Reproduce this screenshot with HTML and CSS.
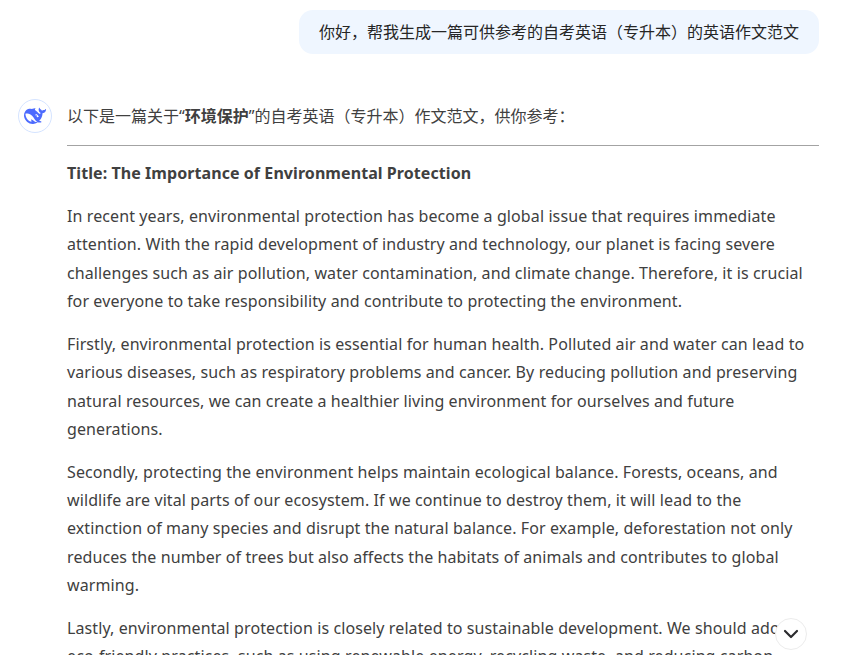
FILE: index.html
```html
<!DOCTYPE html>
<html lang="zh-CN">
<head>
    <meta charset="UTF-8">
    <meta name="viewport" content="width=device-width, initial-scale=1.0">
    <title>自考英语作文范文</title>
    <link rel="stylesheet" href="styles.css">
</head>
<body>
    <main class="chat">
        <div class="user-row">
            <div class="user-bubble">你好，帮我生成一篇可供参考的自考英语（专升本）的英语作文范文</div>
        </div>

        <div class="answer-row">
            <div class="avatar">
                <svg width="22" height="22" viewBox="0 0 24 24">
                    <path fill="#4d6bfe" d="M23.748 4.482c-.254-.124-.364.113-.512.234-.051.039-.094.09-.137.136-.372.397-.806.657-1.373.626-.829-.046-1.537.214-2.163.848-.133-.782-.575-1.248-1.247-1.548-.352-.156-.708-.311-.955-.65-.172-.241-.219-.51-.305-.774-.055-.16-.11-.323-.293-.35-.2-.031-.278.136-.356.276-.313.572-.434 1.202-.422 1.84.027 1.436.633 2.58 1.838 3.393.137.093.172.187.129.323-.082.28-.18.552-.266.833-.055.179-.137.217-.329.14a5.526 5.526 0 01-1.736-1.18c-.857-.828-1.631-1.742-2.597-2.458a11.365 11.365 0 00-.689-.471c-.985-.957.13-1.743.388-1.836.27-.098.093-.432-.779-.428-.872.004-1.67.295-2.687.684a3.055 3.055 0 01-.465.137 9.597 9.597 0 00-2.883-.102c-1.885.21-3.39 1.102-4.497 2.623C.082 8.606-.231 10.684.152 12.85c.403 2.284 1.569 4.175 3.36 5.653 1.858 1.533 3.997 2.284 6.438 2.14 1.482-.085 3.133-.284 4.994-1.86.47.234.962.327 1.78.397.63.059 1.236-.03 1.705-.128.735-.156.684-.837.419-.961-2.155-1.004-1.682-.595-2.113-.926 1.096-1.296 2.746-2.642 3.392-7.003.05-.347.007-.565 0-.845-.004-.17.035-.237.23-.256a4.173 4.173 0 001.545-.475c1.396-.763 1.96-2.015 2.093-3.517.02-.23-.004-.467-.247-.588zM11.581 18c-2.089-1.642-3.102-2.183-3.52-2.16-.392.024-.321.471-.235.763.09.288.207.486.371.739.114.167.192.416-.113.603-.673.416-1.842-.14-1.897-.167-1.361-.802-2.5-1.86-3.301-3.307-.774-1.393-1.224-2.887-1.298-4.482-.02-.386.093-.522.477-.592a4.696 4.696 0 011.529-.039c2.132.312 3.946 1.265 5.468 2.774.868.86 1.525 1.887 2.202 2.891.72 1.066 1.494 2.082 2.48 2.914.348.292.625.514.891.677-.802.09-2.14.11-3.054-.614zm1-6.44a.306.306 0 01.415-.287.302.302 0 01.2.288.306.306 0 01-.31.307.303.303 0 01-.305-.308zm3.11 1.596c-.2.081-.399.151-.59.16a1.245 1.245 0 01-.798-.254c-.274-.23-.47-.358-.552-.758a1.73 1.73 0 01.016-.588c.07-.327-.008-.537-.239-.727-.187-.156-.426-.199-.688-.199a.559.559 0 01-.254-.078c-.11-.054-.2-.19-.114-.358.028-.054.16-.186.192-.21.356-.202.767-.136 1.146.016.352.144.618.408 1.001.782.391.451.462.576.685.914.176.265.336.537.445.848.067.195-.019.354-.25.452z"/>
                </svg>
            </div>
            <article class="answer">
                <p class="intro">以下是一篇关于“<strong>环境保护</strong>”的自考英语（专升本）作文范文，供你参考：</p>
                <hr class="divider">
                <p class="essay-title">Title: The Importance of Environmental Protection</p>
                <p>In recent years, environmental protection has become a global issue that requires immediate attention. With the rapid development of industry and technology, our planet is facing severe challenges such as air pollution, water contamination, and climate change. Therefore, it is crucial for everyone to take responsibility and contribute to protecting the environment.</p>
                <p>Firstly, environmental protection is essential for human health. Polluted air and water can lead to various diseases, such as respiratory problems and cancer. By reducing pollution and preserving natural resources, we can create a healthier living environment for ourselves and future generations.</p>
                <p>Secondly, protecting the environment helps maintain ecological balance. Forests, oceans, and wildlife are vital parts of our ecosystem. If we continue to destroy them, it will lead to the extinction of many species and disrupt the natural balance. For example, deforestation not only reduces the number of trees but also affects the habitats of animals and contributes to global warming.</p>
                <p>Lastly, environmental protection is closely related to sustainable development. We should adopt eco-friendly practices, such as using renewable energy, recycling waste, and reducing carbon emissions.</p>
            </article>
        </div>
    </main>

    <button class="scroll-down" type="button" aria-label="滚动到底部">
        <svg width="16" height="10" viewBox="0 0 16 10">
            <path d="M2 2l6 6 6-6" fill="none" stroke="#2b2b2e" stroke-width="2.200" stroke-linecap="round" stroke-linejoin="round"/>
        </svg>
    </button>
</body>
</html>
```

FILE: styles.css
```css
html, body {
    height: 100%;
}

body {
    margin: 0;
    overflow: hidden;
    background-color: #fff;
    color: #404040;
    font-family: "Noto Sans", "Noto Sans CJK SC", sans-serif;
    font-size: 16px;
}

.chat {
    padding: 10px 32px 0 18px;
}

.user-row {
    display: flex;
    justify-content: flex-end;
    margin-bottom: 45px;
}

.user-bubble {
    background-color: #eff6ff;
    color: #262626;
    border-radius: 14px;
    padding: 0 20px;
    line-height: 44px;
}

.answer-row {
    display: flex;
    gap: 15px;
}

.avatar {
    flex: none;
    width: 32px;
    height: 32px;
    border: 1px solid #d5e4ff;
    border-radius: 50%;
    display: flex;
    align-items: center;
    justify-content: center;
}

.answer {
    flex: 1;
    min-width: 0;
    line-height: 28.4px;
    letter-spacing: 0.103px;
}

.answer p {
    margin: 0 0 14.2px;
}

.answer .intro {
    margin: 3px 0 15px;
    letter-spacing: 0;
}

.divider {
    border: none;
    border-top: 1px solid #a3a3a3;
    margin: 0 0 13px;
}

.answer .essay-title {
    font-weight: 700;
    letter-spacing: 0.07px;
}

.scroll-down {
    position: absolute;
    left: 775px;
    top: 618px;
    width: 32px;
    height: 32px;
    padding: 0;
    background-color: #fff;
    border: 1px solid #ececec;
    border-radius: 50%;
    display: flex;
    align-items: center;
    justify-content: center;
}
```
